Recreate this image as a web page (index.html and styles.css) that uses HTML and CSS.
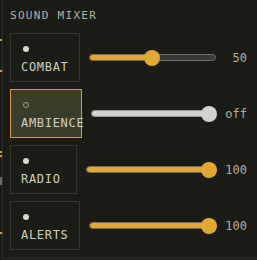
FILE: index.html
```html
<!DOCTYPE html>
<html>
<head>
<meta charset="utf-8">
<link rel="stylesheet" href="styles.css">
</head>
<body>
<div class="edge"></div>
<div class="panel">
  <div class="title">SOUND MIXER</div>
  <div class="rows">
    <div class="row">
      <div class="btn"><span class="dot"></span><span class="label">COMBAT</span></div>
      <div class="slider"><div class="track"><div class="fill" style="width:50%"></div></div><div class="knob" style="--p:0.5"></div></div>
      <div class="val">50</div>
    </div>
    <div class="row">
      <div class="btn active"><span class="dot ring"></span><span class="label">AMBIENCE</span></div>
      <div class="slider off"><div class="track"><div class="fill" style="width:100%"></div></div><div class="knob" style="--p:1"></div></div>
      <div class="val">off</div>
    </div>
    <div class="row">
      <div class="btn"><span class="dot"></span><span class="label">RADIO</span></div>
      <div class="slider"><div class="track"><div class="fill" style="width:100%"></div></div><div class="knob" style="--p:1"></div></div>
      <div class="val">100</div>
    </div>
    <div class="row">
      <div class="btn"><span class="dot"></span><span class="label">ALERTS</span></div>
      <div class="slider"><div class="track"><div class="fill" style="width:100%"></div></div><div class="knob" style="--p:1"></div></div>
      <div class="val">100</div>
    </div>
  </div>
</div>
</body>
</html>
```

FILE: styles.css
```css
* { box-sizing: border-box; }
html, body { margin: 0; padding: 0; }
body {
  width: 257px;
  height: 260px;
  overflow: hidden;
  display: flex;
  background: #15160f;
  font-family: "DejaVu Sans Mono", "Liberation Mono", monospace;
}
.edge {
  width: 2px;
  flex: none;
  background:
    linear-gradient(to bottom,
      #1a1b15 0, #1a1b15 39px, #d9a030 39px, #d9a030 41px, #1a1b15 41px,
      #1a1b15 70px, #d9a030 70px, #d9a030 72px, #1a1b15 72px,
      #1a1b15 151px, #d9a030 151px, #d9a030 153px, #1a1b15 153px,
      #1a1b15 155px, #d9a030 155px, #d9a030 157px, #1a1b15 157px,
      #1a1b15 177px, #6a6b5e 177px, #6a6b5e 185px, #1a1b15 185px,
      #1a1b15 232px, #d9a030 232px, #d9a030 234px, #1a1b15 234px);
}
.panel {
  flex: 1;
  height: 259px;
  background: #1b1c16;
  border-left: 1px solid #2e3027;
  border-bottom: 1px solid #2e3027;
  padding: 9px 10px 0 7px;
}
.title {
  font-size: 11px;
  line-height: 14px;
  letter-spacing: 1.3px;
  color: #b3b4a4;
}
.rows {
  margin-top: 10px;
  display: flex;
  flex-direction: column;
  gap: 7px;
}
.row {
  display: flex;
  align-items: center;
  height: 49px;
}
.btn {
  height: 49px;
  min-width: 67px;
  max-width: 72px;
  flex: none;
  border: 1px solid #34362c;
  padding: 11px 10px 0 10px;
  display: flex;
  flex-direction: column;
  align-items: flex-start;
  white-space: nowrap;
}
.btn.active {
  background: #3a3d2a;
  border-color: #d6a030;
}
.dot {
  width: 6px;
  height: 6px;
  border-radius: 50%;
  background: #d8d8c8;
  margin-left: 2px;
  margin-top: 1px;
}
.dot.ring {
  background: transparent;
  border: 1px solid #a9aa92;
}
.label {
  margin-top: 8px;
  font-size: 12px;
  line-height: 14px;
  letter-spacing: 0.7px;
  color: #d0d0c0;
}
.slider {
  flex: 1;
  margin-left: 9px;
  position: relative;
  height: 16px;
  display: flex;
  align-items: center;
}
.track {
  width: 100%;
  height: 7px;
  border-radius: 4px;
  background: #3a3a38;
  border: 1px solid #707068;
  overflow: hidden;
}
.fill {
  height: 100%;
  background: #e2a834;
}
.knob {
  position: absolute;
  top: 0;
  left: calc(7.5px + (100% - 15px) * var(--p));
  width: 16px;
  height: 16px;
  margin-left: -8px;
  border-radius: 50%;
  background: #e2a834;
}
.slider.off .track { background: #d2d2ce; border-color: #9a9a92; }
.slider.off .fill { background: #d2d2ce; }
.slider.off .knob { background: #d2d2ce; }
.val {
  width: 31px;
  flex: none;
  text-align: right;
  font-size: 12px;
  color: #b0b19c;
}
```
